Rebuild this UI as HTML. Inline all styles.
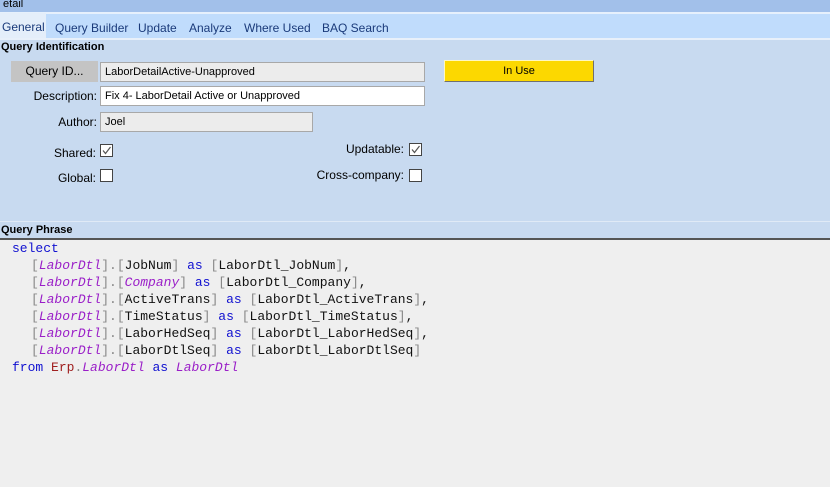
<!DOCTYPE html>
<html><head><meta charset="utf-8"><style>
*{margin:0;padding:0;box-sizing:border-box}
body{width:830px;height:487px;overflow:hidden;font-family:"Liberation Sans",Arial,sans-serif;font-size:12px;background:#efefef;position:relative;color:#000}
.a{position:absolute}
.inp{position:absolute;border:1px solid #a8a8a8;background:#ececec;font-size:11px;padding:0 0 0 4px;line-height:18px;height:20px}
.lbl{position:absolute;text-align:right;font-size:12px}
.cb{position:absolute;width:13px;height:13px;border:1px solid #444;background:#fff}
.cb svg{position:absolute;left:0;top:0}
.code{position:absolute;left:12px;top:240px;font-family:"Liberation Mono","Courier New",monospace;font-size:13px;line-height:17px;color:#111;white-space:pre}
.code div.i{padding-left:19px}
.k{color:#1010d0}.g{color:#888}.p{color:#9a1ec8;font-style:italic}
</style></head><body>
<div class="a" style="left:0;top:0;width:830px;height:12px;background:#a2c0ea;font-size:11px;line-height:8px;overflow:hidden">&nbsp;etail</div>
<div class="a" style="left:0;top:12px;width:830px;height:2px;background:#e6f0fc"></div>
<div class="a" style="left:0;top:14px;width:830px;height:24px;background:#c0dcfc"></div>
<div class="a" style="left:0;top:13px;width:46px;height:26px;background:#e4eefa"></div>
<div class="a" style="left:2px;top:20px;font-size:12px;color:#1a3a7a">General</div>
<div class="a" style="left:55px;top:21px;font-size:12px;color:#1a3a7a">Query Builder</div>
<div class="a" style="left:138px;top:21px;font-size:12px;color:#1a3a7a">Update</div>
<div class="a" style="left:189px;top:21px;font-size:12px;color:#1a3a7a">Analyze</div>
<div class="a" style="left:244px;top:21px;font-size:12px;color:#1a3a7a">Where Used</div>
<div class="a" style="left:322px;top:21px;font-size:12px;color:#1a3a7a">BAQ Search</div>
<div class="a" style="left:0;top:38px;width:830px;height:2px;background:#e8f0fa"></div>
<div class="a" style="left:0;top:40px;width:830px;height:199px;background:#c8daf0"></div>
<div class="a" style="left:1px;top:41px;font-size:11px;font-weight:bold">Query Identification</div>
<div class="a" style="left:11px;top:61px;width:87px;height:21px;background:#c4c4c4;font-size:12px;text-align:center;line-height:21px">Query ID...</div>
<div class="inp" style="left:100px;top:62px;width:325px">LaborDetailActive-Unapproved</div>
<div class="a" style="left:444px;top:60px;width:150px;height:22px;background:#fcd800;border:1px solid;border-color:#fff8c0 #707070 #707070 #fff8c0;font-size:11px;text-align:center;line-height:20px">In Use</div>
<div class="lbl" style="left:0;top:89px;width:97px">Description:</div>
<div class="inp" style="left:100px;top:86px;width:325px;background:#fff">Fix 4- LaborDetail Active or Unapproved</div>
<div class="lbl" style="left:0;top:115px;width:97px">Author:</div>
<div class="inp" style="left:100px;top:112px;width:213px">Joel</div>
<div class="lbl" style="left:0;top:146px;width:96px">Shared:</div>
<div class="cb" style="left:100px;top:144px"><svg width="11" height="11"><path d="M2 5.5 L4.5 8.5 L9.5 2" stroke="#555" stroke-width="1.2" fill="none"/></svg></div>
<div class="lbl" style="left:0;top:171px;width:96px">Global:</div>
<div class="cb" style="left:100px;top:169px"></div>
<div class="lbl" style="left:250px;top:142px;width:154px">Updatable:</div>
<div class="cb" style="left:409px;top:143px"><svg width="11" height="11"><path d="M2 5.5 L4.5 8.5 L9.5 2" stroke="#555" stroke-width="1.2" fill="none"/></svg></div>
<div class="lbl" style="left:250px;top:168px;width:154px">Cross-company:</div>
<div class="cb" style="left:409px;top:169px"></div>
<div class="a" style="left:0;top:221px;width:830px;height:1px;background:#e0eaf6"></div>
<div class="a" style="left:1px;top:224px;font-size:11px;font-weight:bold">Query Phrase</div>
<div class="a" style="left:0;top:238px;width:830px;height:2px;background:#555"></div>
<div class="code"><div><span class="k">select</span></div><div class="i"><span class="g">[</span><span class="p">LaborDtl</span><span class="g">].[</span>JobNum<span class="g">]</span> <span class="k">as</span> <span class="g">[</span>LaborDtl_JobNum<span class="g">]</span>,</div><div class="i"><span class="g">[</span><span class="p">LaborDtl</span><span class="g">].[</span><span class="p">Company</span><span class="g">]</span> <span class="k">as</span> <span class="g">[</span>LaborDtl_Company<span class="g">]</span>,</div><div class="i"><span class="g">[</span><span class="p">LaborDtl</span><span class="g">].[</span>ActiveTrans<span class="g">]</span> <span class="k">as</span> <span class="g">[</span>LaborDtl_ActiveTrans<span class="g">]</span>,</div><div class="i"><span class="g">[</span><span class="p">LaborDtl</span><span class="g">].[</span>TimeStatus<span class="g">]</span> <span class="k">as</span> <span class="g">[</span>LaborDtl_TimeStatus<span class="g">]</span>,</div><div class="i"><span class="g">[</span><span class="p">LaborDtl</span><span class="g">].[</span>LaborHedSeq<span class="g">]</span> <span class="k">as</span> <span class="g">[</span>LaborDtl_LaborHedSeq<span class="g">]</span>,</div><div class="i"><span class="g">[</span><span class="p">LaborDtl</span><span class="g">].[</span>LaborDtlSeq<span class="g">]</span> <span class="k">as</span> <span class="g">[</span>LaborDtl_LaborDtlSeq<span class="g">]</span></div><div><span class="k">from</span> <span style="color:#a02020">Erp</span><span class="g">.</span><span class="p">LaborDtl</span> <span class="k">as</span> <span class="p">LaborDtl</span></div></div>
</body></html>
